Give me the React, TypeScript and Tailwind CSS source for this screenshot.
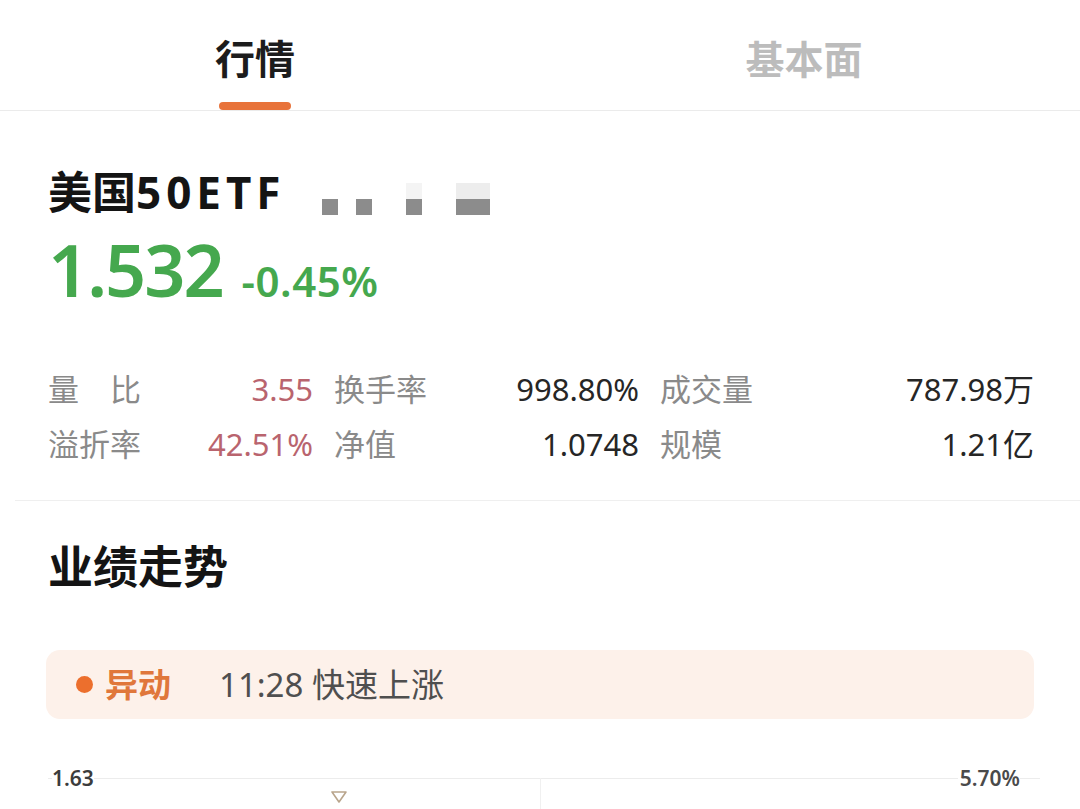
import React from 'react';

const font = { fontFamily: '"Noto Sans", "Noto Sans CJK SC", sans-serif' };

const stats = [
  [
    { label: '量　比', value: '3.55', tone: 'red' },
    { label: '换手率', value: '998.80%', tone: 'dark' },
    { label: '成交量', value: '787.98万', tone: 'dark' },
  ],
  [
    { label: '溢折率', value: '42.51%', tone: 'red' },
    { label: '净值', value: '1.0748', tone: 'dark' },
    { label: '规模', value: '1.21亿', tone: 'dark' },
  ],
];

function Tabs() {
  return (
    <div className="flex h-[111px] border-b border-[#ebebeb]">
      <div className="w-[516px] flex flex-col items-center pt-[34px]">
        <span className="text-[40px] leading-[50px] font-bold text-[#1c1c1c]">行情</span>
        <span className="mt-auto h-[8px] w-[72px] rounded-full bg-[#e8733a]" />
      </div>
      <div className="w-[576px] flex justify-center pt-[34px] pl-[18px]">
        <span className="text-[39px] leading-[50px] font-bold text-[#bcbcbc]">基本面</span>
      </div>
    </div>
  );
}

function Masked() {
  return (
    <div className="flex flex-col ml-[36px] mt-[14px]">
      <div className="flex h-[16px]">
        <span className="w-[84px]" />
        <span className="w-[16px] bg-[#f4f4f4]" />
        <span className="w-[34px]" />
        <span className="w-[34px] bg-[#ededed]" />
      </div>
      <div className="flex h-[16px]">
        <span className="w-[16px] bg-[#8c8c8c]" />
        <span className="w-[18px]" />
        <span className="w-[16px] bg-[#8c8c8c]" />
        <span className="w-[34px]" />
        <span className="w-[16px] bg-[#8c8c8c]" />
        <span className="w-[34px]" />
        <span className="w-[34px] bg-[#8c8c8c]" />
      </div>
    </div>
  );
}

export default function App() {
  return (
    <div className="w-[1080px] h-[809px] overflow-hidden bg-white" style={font}>
      <Tabs />

      <div className="px-[48px] pt-[56px]">
        <div className="flex items-center h-[50px]">
          <span className="text-[44px] leading-[50px] font-bold text-[#141414]">
            美国<span className="tracking-[5px]">50ETF</span>
          </span>
          <Masked />
        </div>
        <div className="flex items-baseline mt-[19px] text-[#45a84e] font-semibold">
          <span className="text-[72px] leading-[66px] tracking-[-2px]">1.532</span>
          <span className="text-[42px] leading-[40px] ml-[19px] tracking-[0.5px]">-0.45%</span>
        </div>

        <div className="mt-[67px] flex flex-col gap-[14px] text-[31px] leading-[41px]">
          {stats.map((row, i) => (
            <div key={i} className="grid grid-cols-[265px_305px_374px] gap-x-[21px]">
              {row.map((s) => (
                <div key={s.label} className="flex justify-between">
                  <span className="text-[#8a8a8a]">{s.label}</span>
                  <span className={s.tone === 'red' ? 'text-[#b9646e]' : 'text-[#262626]'}>{s.value}</span>
                </div>
              ))}
            </div>
          ))}
        </div>
      </div>

      <div className="mt-[35px] ml-[15px] border-t border-[#efefef]" />

      <div className="px-[46px]">
        <h2 className="mt-[39px] ml-[2px] text-[45px] leading-[54px] font-bold text-[#141414]">业绩走势</h2>

        <div className="mt-[56px] h-[69px] rounded-[14px] bg-[#fdf1ea] flex items-center px-[30px]">
          <span className="w-[17px] h-[17px] rounded-full bg-[#ec6f2d]" />
          <span className="ml-[12px] text-[33px] font-semibold text-[#e0773b]">异动</span>
          <span className="ml-[48px] text-[33px] text-[#4f4f4f]">11:28 快速上涨</span>
        </div>

        <div className="relative mt-[47px] h-[60px]">
          <div className="absolute left-[2px] right-[-6px] top-[12px] border-t border-[#ececec]" />
          <div className="absolute left-[494px] top-[12px] bottom-0 border-l border-[#f0f0f0]" />
          <span className="absolute left-[6px] top-0 text-[21px] leading-[24px] font-semibold text-[#3c3c3c] bg-white">1.63</span>
          <span className="absolute right-[14px] top-0 text-[21px] leading-[24px] font-semibold text-[#4a4a4a] bg-white pl-[2px]">5.70%</span>
          <svg className="absolute left-[284px] top-[24px]" width="18" height="14" viewBox="0 0 18 14">
            <path d="M2 2 L16 2 L9 12 Z" fill="none" stroke="#b9a58c" strokeWidth="1.6" strokeLinejoin="round" />
          </svg>
        </div>
      </div>
    </div>
  );
}
